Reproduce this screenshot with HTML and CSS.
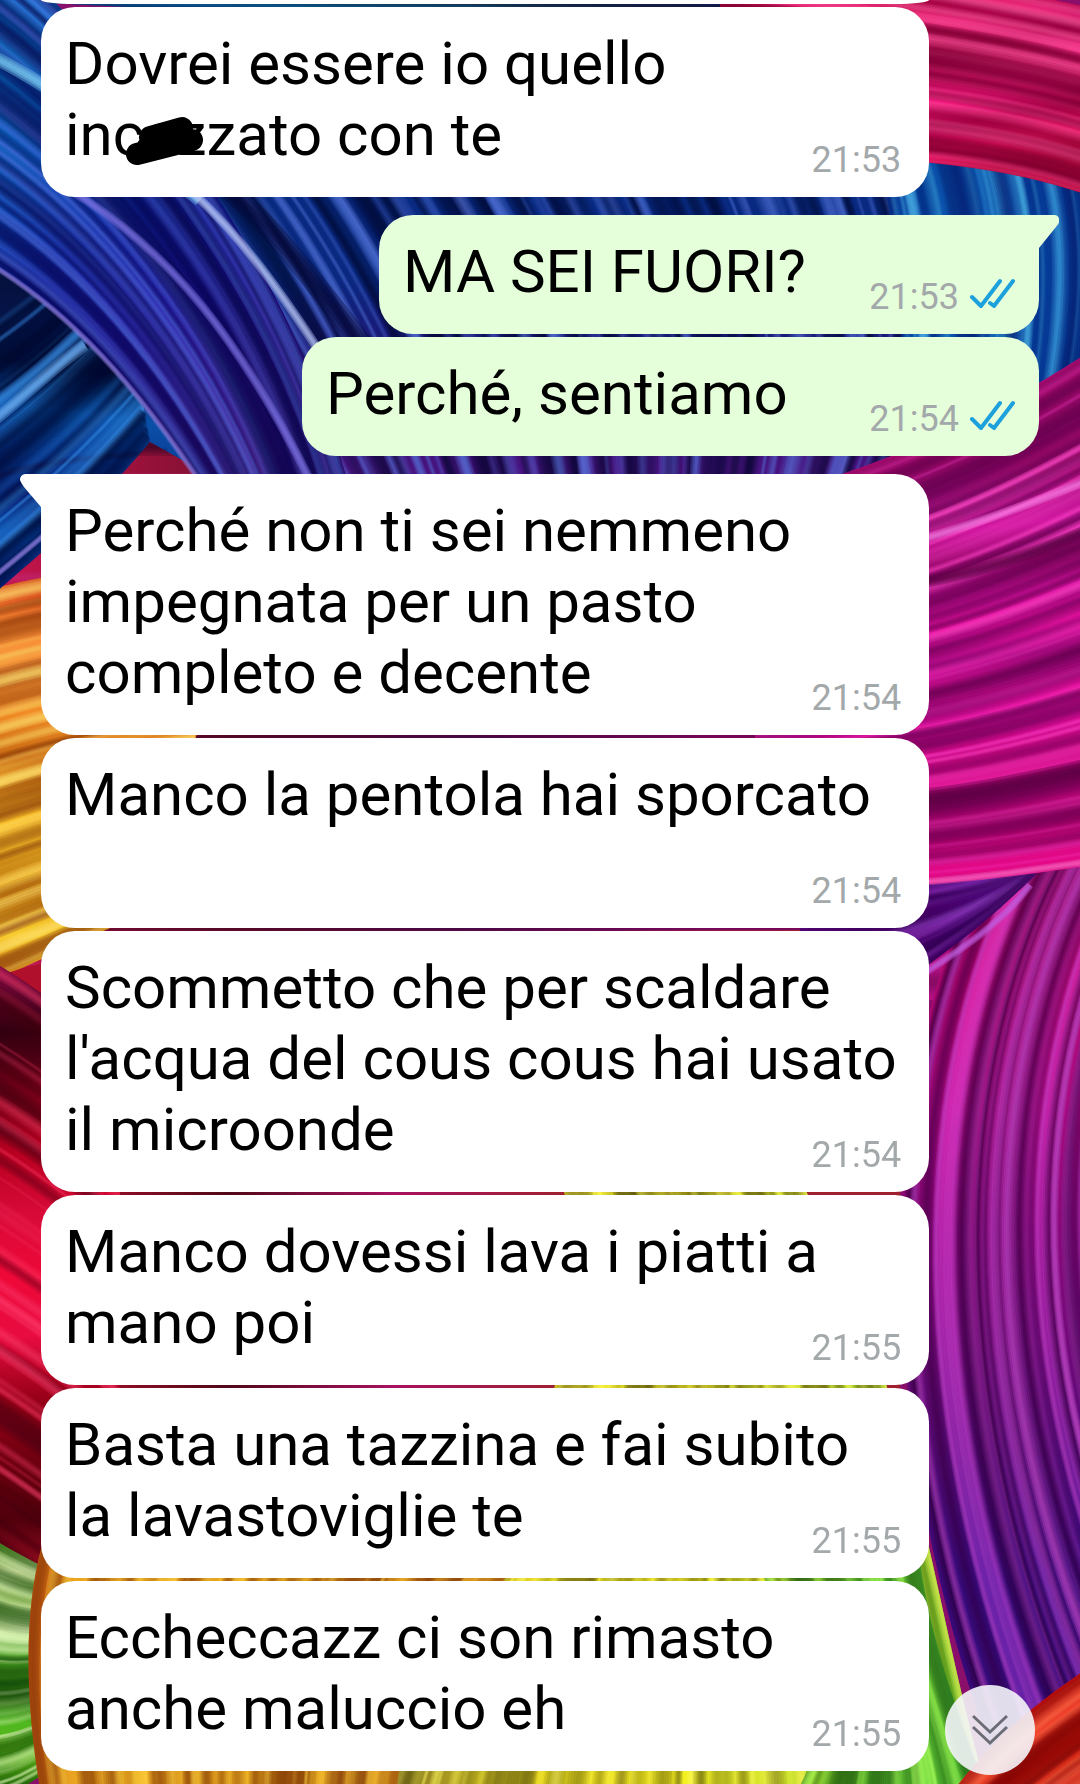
FILE: index.html
```html
<!DOCTYPE html>
<html lang="it">
<head>
<meta charset="utf-8">
<meta name="viewport" content="width=device-width, initial-scale=1">
<title>Chat</title>
<link rel="stylesheet" href="styles.css">
</head>
<body>
<canvas class="wallpaper" width="1080" height="1784" aria-hidden="true"></canvas>
<main class="chat">
  <section class="group group-in">
    <article class="bubble bubble-cut"></article>
    <article class="bubble">
      <p class="text">Dovrei essere io quello<br>inc<span class="censored">az<svg class="scribble" viewBox="0 0 80 52" aria-hidden="true"><path d="M12 41L67 27M25 24L57 15M22 35L67 27M26 28L56 18"/></svg></span>zato con te</p>
      <footer class="meta"><time>21:53</time></footer>
    </article>
  </section>
  <section class="group group-out">
    <article class="bubble bubble-short">
      <svg class="tail tail-out" viewBox="0 0 22 34" aria-hidden="true"><path d="M0 0H16Q21 1 20 7Q20 9 17 12L0 33Z"/></svg>
      <p class="text">MA SEI FUORI?</p>
      <footer class="meta"><time>21:53</time><svg class="ticks" viewBox="0 0 46 32" role="img" aria-label="Letto"><path d="M3 19L12 28L31 3M21 25L25 28L44 3"/></svg></footer>
    </article>
    <article class="bubble bubble-long">
      <p class="text">Perché, sentiamo</p>
      <footer class="meta"><time>21:54</time><svg class="ticks" viewBox="0 0 46 32" role="img" aria-label="Letto"><path d="M3 19L12 28L31 3M21 25L25 28L44 3"/></svg></footer>
    </article>
  </section>
  <section class="group group-in">
    <article class="bubble bubble-first">
      <svg class="tail tail-in" viewBox="0 0 22 34" aria-hidden="true"><path d="M22 0H6Q1 1 1 6Q2 9 5 13L22 33Z"/></svg>
      <p class="text">Perché non ti sei nemmeno<br>impegnata per un pasto<br>completo e decente</p>
      <footer class="meta"><time>21:54</time></footer>
    </article>
    <article class="bubble bubble-wrapped">
      <p class="text">Manco la pentola hai sporcato</p>
      <footer class="meta"><time>21:54</time></footer>
    </article>
    <article class="bubble">
      <p class="text">Scommetto che per scaldare<br>l'acqua del cous cous hai usato<br>il microonde</p>
      <footer class="meta"><time>21:54</time></footer>
    </article>
    <article class="bubble">
      <p class="text">Manco dovessi lava i piatti a<br>mano poi</p>
      <footer class="meta"><time>21:55</time></footer>
    </article>
    <article class="bubble">
      <p class="text">Basta una tazzina e fai subito<br>la lavastoviglie te</p>
      <footer class="meta"><time>21:55</time></footer>
    </article>
    <article class="bubble">
      <p class="text">Eccheccazz ci son rimasto<br>anche maluccio eh</p>
      <footer class="meta"><time>21:55</time></footer>
    </article>
  </section>
</main>
<button class="scroll-down" type="button" aria-label="Vai in fondo"><svg viewBox="0 0 36 32" aria-hidden="true"><path d="M1 2L18 18L35 2M1 13L18 29L35 13"/></svg></button>
<script src="wallpaper.js"></script>
</body>
</html>
```
FILE: styles.css
```css
* {
  box-sizing: border-box;
}

body {
  margin: 0;
  overflow-x: hidden;
  background: #8a0f6a;
  font-family: Roboto, "Liberation Sans", sans-serif;
}

.wallpaper {
  position: fixed;
  inset: 0;
  z-index: -1;
  width: 100%;
  height: 100%;
  object-fit: cover;
}

.chat {
  display: flex;
  flex-direction: column;
  gap: 18px;
  padding: 0 41px 13px;
}

.group {
  display: flex;
  flex-direction: column;
  gap: 3px;
}

.group-in {
  align-items: flex-start;
}

.group-out {
  align-items: flex-end;
}

.bubble {
  position: relative;
  display: flex;
  justify-content: space-between;
  padding: 21px 24px 27px;
  border-radius: 34px;
  background: #fff;
}

.group-in .bubble {
  width: 89%;
}

.group-in .bubble-cut {
  height: 4px;
  padding: 0;
  border-radius: 0 0 34px 34px / 0 0 4px 4px;
}

.bubble-first {
  border-top-left-radius: 0;
}

.bubble-wrapped {
  flex-direction: column;
}

.group-out .bubble {
  background: #e5ffda;
}

.bubble-short {
  min-width: 660px;
  border-top-right-radius: 0;
}

.bubble-long {
  min-width: 737px;
}

.text {
  margin: 0;
  color: #000;
  font-size: 60px;
  line-height: 71px;
  white-space: nowrap;
}

.meta {
  display: flex;
  align-items: center;
  align-self: flex-end;
  gap: 10px;
  height: 36px;
  margin: 0 4px -8px -120px;
  color: #a3a8aa;
  font-size: 36px;
  line-height: 36px;
}

.group-out .meta {
  margin-right: 0;
}

.bubble-wrapped .meta {
  margin-top: 43px;
}

.ticks {
  width: 46px;
  height: 32px;
  margin-top: -6px;
  fill: none;
  stroke: #1da1dc;
  stroke-width: 4;
  stroke-linecap: round;
  stroke-linejoin: round;
}

.tail {
  position: absolute;
  top: 0;
  width: 22px;
  height: 34px;
}

.tail-in {
  right: 100%;
  fill: #fff;
}

.tail-out {
  left: 100%;
  fill: #e5ffda;
}

.censored {
  position: relative;
}

.scribble {
  position: absolute;
  top: 14px;
  left: -19px;
  width: 80px;
  height: 52px;
  fill: none;
  stroke: #000;
  stroke-width: 22;
  stroke-linecap: round;
}

.scroll-down {
  position: fixed;
  right: 45px;
  bottom: 9px;
  display: grid;
  place-items: center;
  width: 90px;
  height: 90px;
  padding: 0;
  border: 0;
  border-radius: 50%;
  background: rgba(245, 245, 250, 0.9);
}

.scroll-down svg {
  width: 36px;
  height: 32px;
  fill: none;
  stroke: #6c6c74;
  stroke-width: 3;
}
```
FILE: wallpaper.js
```js
// Paints the ribbon wallpaper: each ribbon is the area between two curves,
// filled with a gradient and combed with fine light and dark strands.
const ctx = document.querySelector('.wallpaper').getContext('2d');
let seed = 7;
const rand = () => (seed = (seed * 16807) % 2147483647) / 2147483647;

// a, b: [x0,y0, cx1,cy1, cx2,cy2, x1,y1]; g: gradient line; c: its colours
const ribbons = [
  // crimson and violet ground below the left column
  { a: [-20, 400, 300, 400, 600, 400, 1100, 400], b: [-20, 1000, 300, 1000, 600, 1000, 1100, 1000], g: [0, 0, 700, 0], c: ['#c8144c', '#7a1030', '#6a1060', '#b01080'], n: 20 },
  // orange to yellow
  { a: [-20, 592, 40, 576, 90, 566, 280, 550], b: [-20, 986, 20, 970, 60, 950, 110, 928], g: [0, 580, 0, 980], c: ['#d04018', '#f98a35', '#f59a3c', '#f08a24', '#c86a14', '#f8b828', '#fcc82a', '#e8a818', '#f8cc30', '#d88c18'], n: 50, hi: '#ffe070', lo: '#803008' },
  // dark maroon to red
  { a: [-20, 985, 60, 940, 300, 930, 900, 930], b: [-20, 1530, 60, 1590, 300, 1600, 900, 1590], g: [60, 0, 560, 0], c: ['#b0102c', '#500818', '#a81060', '#a02030'], n: 10 },
  { a: [-20, 955, 0, 965, 60, 1000, 120, 1060], b: [-20, 1530, 0, 1545, 60, 1580, 120, 1640], g: [0, 970, 0, 1580], c: ['#800840', '#300010', '#700018', '#b80020', '#d80a38', '#ee0838', '#e80c40', '#980018', '#700010', '#50000c', '#a00c24'], n: 36, hi: '#ff4070', lo: '#400010' },
  // yellow under the lower bubbles
  { a: [560, 1180, 640, 1400, 400, 1600, 340, 1800], b: [800, 1180, 920, 1400, 930, 1600, 990, 1800], g: [400, 0, 960, 0], c: ['#887820', '#e8d820', '#f4f020', '#c0dc30', '#60b828'], n: 70, hi: '#fff860', lo: '#605810' },
  // green, bottom left
  { a: [-20, 1530, 0, 1545, 30, 1560, 50, 1570], b: [-20, 1800, 0, 1800, 40, 1784, 70, 1750], g: [0, 1540, 0, 1784], c: ['#50981c', '#a8c080', '#70a040', '#c8e0a0', '#48a020', '#185008', '#50b820', '#58b018', '#246808'], n: 30, hi: '#e8ffc0', lo: '#104008' },
  // orange stem curving into the yellow bottom edge
  { a: [42, 1545, 24, 1610, 24, 1700, 42, 1800], b: [520, 1560, 480, 1610, 400, 1700, 396, 1800], g: [25, 0, 400, 0], c: ['#c85018', '#e8a018', '#f4b424', '#d89018', '#f0b020', '#d09018', '#f0b428', '#d08818'], n: 70, hi: '#ffd040', lo: '#803808' },
  // green, bottom right
  { a: [760, 1570, 800, 1650, 840, 1740, 790, 1800], b: [920, 1560, 930, 1640, 960, 1720, 990, 1800], g: [760, 0, 980, 0], c: ['#c8d828', '#a0e030', '#58b828', '#68d038', '#40b030'], n: 30, hi: '#b0ff60', lo: '#185010' },
  // deep blue, left wedge
  { a: [-20, 250, 60, 250, 120, 330, 200, 470], b: [-20, 606, 20, 570, 80, 525, 150, 442], g: [60, 280, 20, 580], c: ['#04103c', '#061448', '#04123c', '#0a50a8', '#0a3c98', '#082070', '#0848a8', '#0a2c88'], n: 1 },
  { a: [-20, 330, 40, 290, 60, 270, 110, 220], b: [-20, 606, 20, 570, 80, 525, 150, 442], n: 30, hi: '#3a90e8', lo: '#020830' },
  // blue field behind the green bubbles
  { a: [-20, 40, 120, 120, 240, 320, 330, 490], b: [1030, 90, 1080, 200, 1100, 330, 1000, 480], g: [500, 180, 500, 475], c: ['#082a80', '#0a2880', '#241070', '#4a1480'], n: 90, hi: '#5a7ae0', lo: '#020628' },
  { a: [0, -60, 300, -10, 700, -10, 900, 0], b: [0, 0, 300, 20, 700, 20, 900, 30], g: [0, 0, 720, 0], c: ['#0c6cc0', '#0a4c80', '#107098', '#0a3c78'], n: 4 },
  { a: [860, 120, 900, 200, 905, 300, 900, 480], b: [1090, 160, 1110, 230, 1110, 330, 1070, 460], g: [860, 0, 1080, 0], c: ['#082a80', '#0a4ca8', '#0c58b0', '#08409c', '#0a58b8'], n: 34, hi: '#50b8e8', lo: '#04186a' },
  // blue to violet arc
  { a: [-20, 258, 70, 310, 140, 390, 205, 490], b: [-20, -60, 130, 50, 290, 260, 350, 490], g: [20, 60, 260, 470], c: ['#0c6cc0', '#0a50b0', '#1228a0', '#2418a0', '#3c1490', '#52127c'], n: 44, hi: '#5a78e8', lo: '#080850' },
  // crimson, top right
  { a: [720, -60, 800, -40, 950, -25, 1100, 10], b: [720, 165, 850, 150, 1000, 160, 1100, 200], g: [930, 0, 960, 175], c: ['#d80c58', '#e01068', '#c00858', '#f0187c', '#f81480', '#c80858', '#e0105c', '#b80c40'], n: 42, hi: '#ff5ca0', lo: '#780030' },
  // large magenta to violet curve on the right edge
  { a: [1010, 830, 880, 1010, 850, 1400, 1010, 1800], b: [1200, 800, 1060, 1050, 1050, 1350, 1200, 1640], g: [960, 870, 1010, 1700], c: ['#d80c78', '#e00c88', '#d01098', '#a80c90', '#8a1090', '#60108c', '#3c1094', '#3a1090'], n: 48, hi: '#d050d8', lo: '#30003c' },
  // violet wedge
  { a: [800, 870, 930, 870, 1000, 870, 1060, 860], b: [800, 1040, 900, 990, 970, 940, 1040, 870], g: [928, 0, 1040, 0], c: ['#500070', '#5c0c90', '#7c1498'], n: 16, hi: '#a048d0', lo: '#300050' },
  // magenta sweep
  { a: [780, 492, 900, 462, 1000, 410, 1100, 345], b: [740, 890, 900, 890, 1000, 880, 1100, 864], g: [930, 470, 980, 885], c: ['#a80c70', '#b41488', '#d018a0', '#a00c70', '#d0109c', '#e0109c', '#b40c88', '#e810a0', '#d80c98', '#c80880', '#d80888', '#a00468', '#dc0884', '#e80c88'], n: 60, hi: '#ff48c8', lo: '#580048' },
  // red, bottom right
  { a: [950, 1795, 1000, 1730, 1040, 1700, 1100, 1660], b: [960, 1900, 1020, 1860, 1060, 1830, 1100, 1800], g: [1000, 1700, 1050, 1784], c: ['#a00c1c', '#d01410', '#f03c28', '#d81808', '#f04830'], n: 20, hi: '#ff8058', lo: '#800808' },
];

function trace(p, first) {
  if (first) ctx.moveTo(p[0], p[1]);
  ctx.bezierCurveTo(p[2], p[3], p[4], p[5], p[6], p[7]);
}

for (const r of ribbons) {
  ctx.save();
  ctx.beginPath();
  trace(r.a, true);
  ctx.lineTo(r.b[6], r.b[7]);
  ctx.bezierCurveTo(r.b[4], r.b[5], r.b[2], r.b[3], r.b[0], r.b[1]);
  ctx.closePath();
  if (r.g) {
    const fill = ctx.createLinearGradient(...r.g);
    r.c.forEach((c, i) => fill.addColorStop(i / (r.c.length - 1), c));
    ctx.fillStyle = fill;
    ctx.fill();
  }
  ctx.clip();
  for (let i = 0; i < r.n; i++) {
    const t = (i + rand()) / r.n;
    const dark = rand() < 0.5;
    const alpha = dark ? 0.15 + rand() * 0.4 : 0.15 + rand() * rand() * 0.6;
    const width = dark ? 4 + rand() * 8 : 2 + rand() * 5;
    const strand = r.a.map((v, k) => v + (r.b[k] - v) * t);
    ctx.strokeStyle = dark ? r.lo || '#18001c' : r.hi || '#c03080';
    // wide faint passes under narrow ones round the strand off
    for (const k of [2, 1.5, 1, 0.5]) {
      ctx.beginPath();
      trace(strand, true);
      ctx.globalAlpha = alpha * 0.4;
      ctx.lineWidth = width * k;
      ctx.stroke();
    }
  }
  ctx.restore();
}

// bright single strands: curve, colour, width
[
  [[-20, 50, 20, 70, 60, 90, 200, 200], '#7cd0f8', 9],
  [[190, 190, 240, 235, 280, 290, 325, 360], '#b8c8f8', 6],
  [[230, 190, 280, 235, 320, 290, 375, 360], '#040838', 14],
  [[70, 190, 170, 250, 240, 340, 310, 480], '#7a70e0', 6],
  [[-20, 258, 70, 310, 140, 390, 205, 490], '#8878d8', 4],
  [[-20, 432, 20, 400, 50, 370, 85, 345], '#68a8e8', 8],
  [[-20, 588, 0, 572, 20, 556, 50, 530], '#9080e0', 4],
  [[920, 540, 980, 522, 1030, 505, 1100, 475], '#f878e0', 6],
  [[920, 583, 980, 572, 1030, 555, 1100, 525], '#580040', 8],
  [[920, 798, 980, 792, 1030, 780, 1100, 765], '#580040', 12],
  [[920, 882, 980, 878, 1030, 870, 1100, 860], '#ff60c0', 5],
  [[920, 976, 960, 950, 1000, 925, 1030, 885], '#c060e0', 5],
].forEach(([p, colour, width]) => {
  ctx.strokeStyle = colour;
  for (const k of [1.5, 1, 0.5]) {
    ctx.beginPath();
    trace(p, true);
    ctx.globalAlpha = 0.4;
    ctx.lineWidth = width * k;
    ctx.stroke();
  }
});
```
